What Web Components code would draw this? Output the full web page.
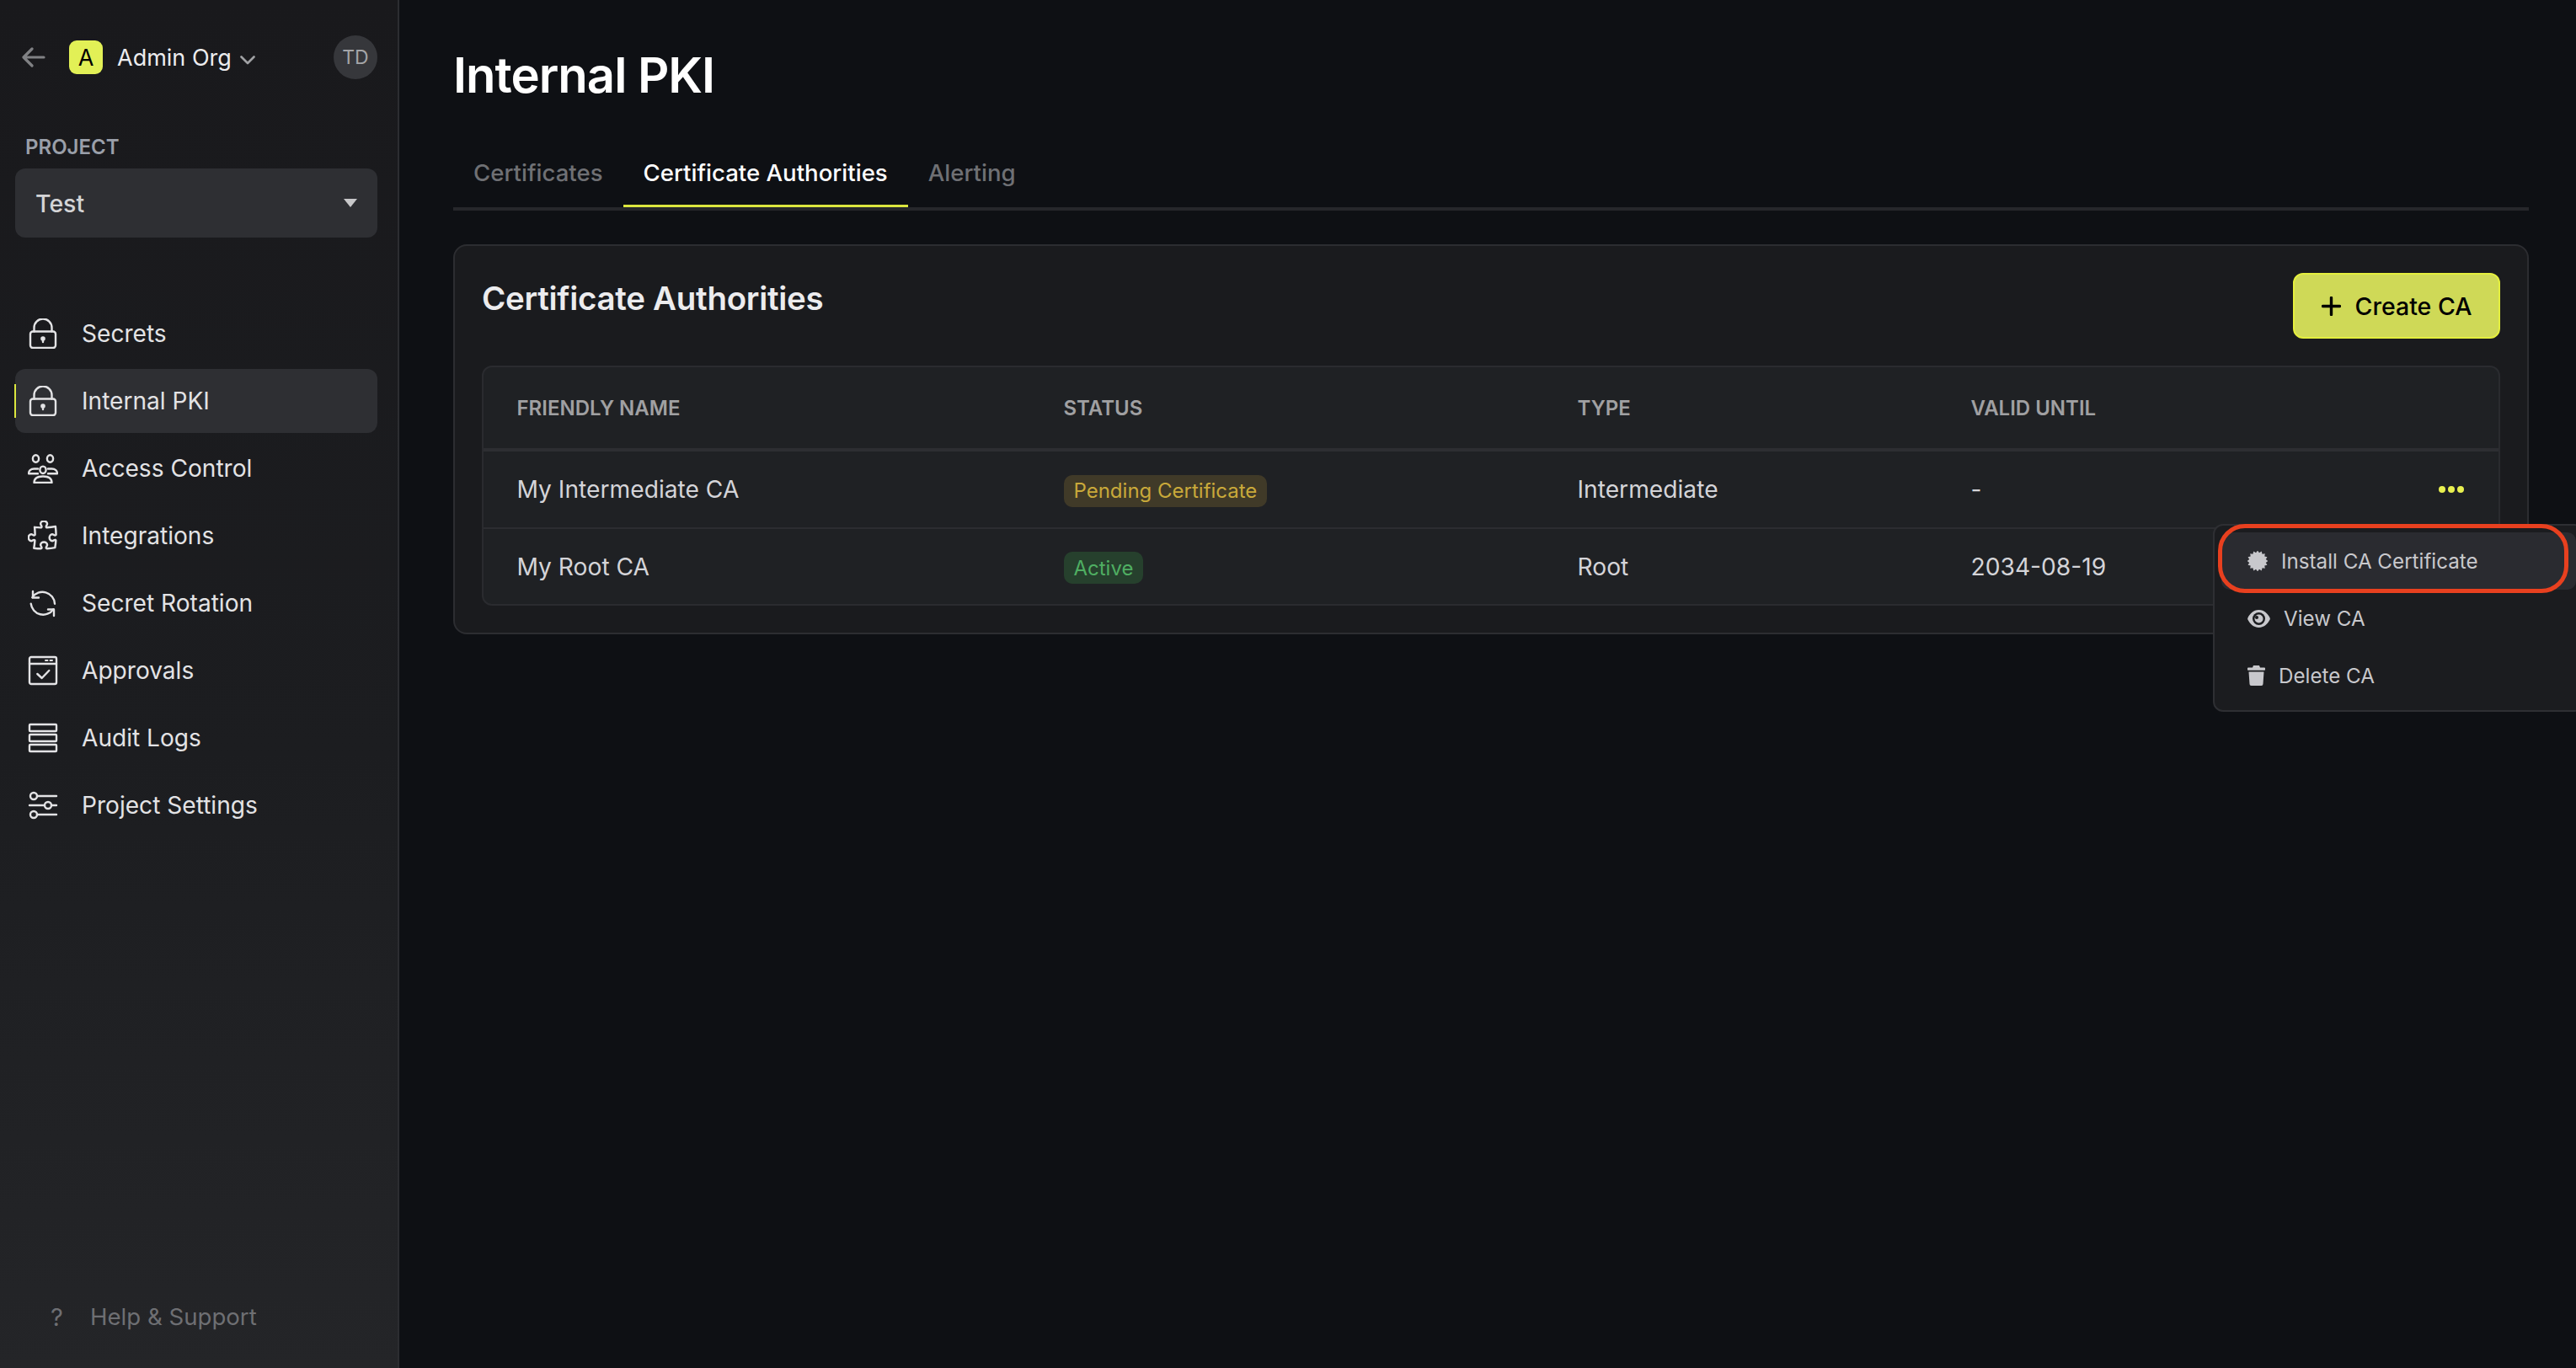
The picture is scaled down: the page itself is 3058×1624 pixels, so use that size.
<!DOCTYPE html>
<html lang="en">
<head>
<meta charset="utf-8">
<title>Internal PKI</title>
<style>
  html, body { margin: 0; background: #0e1014; }
  body { font-family: Inter, "Liberation Sans", sans-serif; color: #e3e3e5; }
</style>
</head>
<body>
<app-shell>
  <side-bar slot="side">
    <org-header></org-header>
    <project-select label="PROJECT" value="Test"></project-select>
    <nav-item icon="lock" label="Secrets"></nav-item>
    <nav-item icon="lock" label="Internal PKI" active></nav-item>
    <nav-item icon="people" label="Access Control"></nav-item>
    <nav-item icon="puzzle" label="Integrations"></nav-item>
    <nav-item icon="rotate" label="Secret Rotation"></nav-item>
    <nav-item icon="approve" label="Approvals"></nav-item>
    <nav-item icon="logs" label="Audit Logs"></nav-item>
    <nav-item icon="sliders" label="Project Settings"></nav-item>
    <help-link slot="foot"></help-link>
  </side-bar>

  <page-title>Internal PKI</page-title>
  <tab-bar>
    <tab-item>Certificates</tab-item>
    <tab-item active>Certificate Authorities</tab-item>
    <tab-item>Alerting</tab-item>
  </tab-bar>

  <ca-card heading="Certificate Authorities">
    <create-button slot="action">Create CA</create-button>
    <ca-table>
      <ca-row head>
        <ca-cell>FRIENDLY NAME</ca-cell>
        <ca-cell>STATUS</ca-cell>
        <ca-cell>TYPE</ca-cell>
        <ca-cell>VALID UNTIL</ca-cell>
        <ca-cell></ca-cell>
      </ca-row>
      <ca-row>
        <ca-cell>My Intermediate CA</ca-cell>
        <ca-cell><status-badge tone="pending">Pending Certificate</status-badge></ca-cell>
        <ca-cell>Intermediate</ca-cell>
        <ca-cell>-</ca-cell>
        <ca-cell><dots-button></dots-button></ca-cell>
      </ca-row>
      <ca-row last>
        <ca-cell>My Root CA</ca-cell>
        <ca-cell><status-badge tone="active">Active</status-badge></ca-cell>
        <ca-cell>Root</ca-cell>
        <ca-cell>2034-08-19</ca-cell>
        <ca-cell></ca-cell>
      </ca-row>
    </ca-table>
  </ca-card>

  <action-menu slot="overlay">
    <menu-item icon="badge" hover>Install CA Certificate</menu-item>
    <menu-item icon="eye">View CA</menu-item>
    <menu-item icon="trash">Delete CA</menu-item>
  </action-menu>
</app-shell>

<script>
// nav icons are drawn on a 36x36 box
const NAV_ICONS = {
  lock: `<rect x="3" y="15.5" width="30" height="19.5" rx="3"/>
    <path d="M7.500 15.500V11a10.500 10.500 0 0 1 21 0v4.500"/>
    <circle cx="18" cy="24" r="1.6" fill="currentColor"/><path d="M18 24v4"/>`,
  people: `<ellipse cx="9.5" cy="6.500" rx="3.600" ry="4.200"/><ellipse cx="26.5" cy="6.500" rx="3.600" ry="4.200"/>
    <ellipse cx="18" cy="19.800" rx="3.600" ry="4.200"/>
    <path d="M12 18.500H7.500C3.500 18.500 1 21 1 24.300h11M24 18.500h4.500c4 0 6.500 2.500 6.500 5.800H24"/>
    <path d="M7.500 35c0-5 4-7.500 10.500-7.500S28.500 30 28.500 35z"/>`,
  puzzle: `<path transform="translate(-3.200 -3.400) scale(1.750)" stroke-width="1.400" d="M14.25 6.087c0-.355.186-.676.401-.959.221-.29.349-.634.349-1.003 0-1.036-1.007-1.875-2.25-1.875s-2.25.84-2.25 1.875c0 .369.128.713.349 1.003.215.283.401.604.401.959a.64.64 0 01-.657.643 48.39 48.39 0 01-4.163-.3c.186 1.613.293 3.25.315 4.907a.656.656 0 01-.658.663c-.355 0-.676-.186-.959-.401a1.647 1.647 0 00-1.003-.349c-1.036 0-1.875 1.007-1.875 2.25s.84 2.25 1.875 2.25c.369 0 .713-.128 1.003-.349.283-.215.604-.401.959-.401.31 0 .555.26.532.57a48.039 48.039 0 01-.642 5.056c1.518.19 3.058.309 4.616.354a.64.64 0 00.657-.643c0-.355-.186-.676-.401-.959a1.647 1.647 0 01-.349-1.003c0-1.035 1.008-1.875 2.25-1.875 1.243 0 2.25.84 2.25 1.875 0 .369-.128.713-.349 1.003-.215.283-.4.604-.4.959 0 .333.277.599.61.58a48.1 48.1 0 005.427-.63 48.05 48.05 0 00.582-4.717.532.532 0 00-.533-.57c-.355 0-.676.186-.959.401-.29.221-.634.349-1.003.349-1.035 0-1.875-1.007-1.875-2.25s.84-2.25 1.875-2.25c.37 0 .713.128 1.003.349.283.215.604.401.96.401a.656.656 0 00.658-.663 48.422 48.422 0 00-.37-5.36c-1.886.342-3.81.574-5.766.689a.578.578 0 01-.61-.58z"/>`,
  rotate: `<path d="M5.300 11.300A14.600 14.600 0 0 1 32 18.700M3.700 18.700A14.600 14.600 0 0 0 30.300 25.300"/>
    <path d="M6 4v7.500h7M31 33v-7.500h-7"/>`,
  approve: `<rect x="2" y="2" width="32" height="32" rx="2"/><path d="M2 10h32"/>
    <path d="M21 6h2.500M26.500 6H29" stroke-width="2"/><path d="M11.300 22l5.400 5 8.600-9"/>`,
  logs: `<rect x="2" y="2" width="32" height="8" rx="1"/><rect x="2" y="14" width="32" height="8" rx="1"/><rect x="2" y="26" width="32" height="8" rx="1"/>`,
  sliders: `<circle cx="7" cy="7" r="4"/><path d="M11 7h23"/><circle cx="24" cy="18" r="4"/><path d="M2 18h18M28 18h6"/>
    <circle cx="7" cy="29" r="4"/><path d="M11 29h23"/>`
};

// certificate seal: a circle with a shallow saw edge
function sealPoints(teeth, outer, inner) {
  const pts = [];
  for (let i = 0; i < teeth * 2; i++) {
    const r = i % 2 ? inner : outer;
    const a = Math.PI * i / teeth;
    pts.push((12 + r * Math.cos(a)).toFixed(2) + ',' + (12 + r * Math.sin(a)).toFixed(2));
  }
  return pts.join(' ');
}

const MENU_ICONS = {
  badge: `<svg width="24" height="24" viewBox="0 0 24 24"><polygon fill="currentColor" points="${sealPoints(16, 12.4, 10)}"/></svg>`,
  eye: `<svg width="27" height="23" viewBox="0 0 27 23"><path fill="currentColor" d="M13.500 1C7 1 2.600 6 .5 10.200a2.800 2.800 0 0 0 0 2.600C2.600 17 7 22 13.500 22s10.900-5 13-9.200a2.800 2.800 0 0 0 0-2.600C24.400 6 20 1 13.500 1z"/>
    <circle cx="13.500" cy="11.500" r="7.500" fill="#1b1c1f"/><circle cx="13.500" cy="11.500" r="5" fill="currentColor"/><circle cx="11" cy="10" r="2" fill="#1b1c1f"/></svg>`,
  trash: `<svg width="21" height="24" viewBox="0 0 21 24"><path fill="currentColor" d="M7 0h7l1 2.500h5a1 1 0 0 1 1 1V5a.8.800 0 0 1-.8.800H.8A.8.800 0 0 1 0 5V3.500a1 1 0 0 1 1-1h5zM1.500 7.500h18l-1 14.500a2 2 0 0 1-2 2H4.500a2 2 0 0 1-2-2z"/></svg>`
};

class AppShell extends HTMLElement {
  constructor() {
    super();
    this.attachShadow({ mode: 'open' }).innerHTML = `
      <style>
        :host { display: block; width: 3058px; height: 1624px; overflow: hidden; position: relative; }
        .frame { display: flex; height: 100%; }
        .main { flex: 1; min-width: 0; padding: 0 56px 0 64px; display: flex; flex-direction: column; }
      </style>
      <div class="frame">
        <slot name="side"></slot>
        <div class="main"><slot></slot></div>
      </div>
      <slot name="overlay"></slot>`;
  }
}

class SideBar extends HTMLElement {
  constructor() {
    super();
    this.attachShadow({ mode: 'open' }).innerHTML = `
      <style>
        :host {
          display: flex; flex-direction: column; box-sizing: border-box; width: 474px; height: 100%;
          background: linear-gradient(180deg, #19191c, #1c1d20 55%, #242528);
          border-right: 2px solid #2c2d31;
        }
        .nav { display: flex; flex-direction: column; gap: 4px; padding: 76px 24px 0 18px; }
        .foot { margin-top: auto; }
      </style>
      <slot name="head"></slot>
      <div class="nav"><slot></slot></div>
      <div class="foot"><slot name="foot"></slot></div>`;
  }
  connectedCallback() {
    // org header and project picker sit above the nav list
    this.querySelector('org-header').slot = 'head';
    this.querySelector('project-select').slot = 'head';
  }
}

class OrgHeader extends HTMLElement {
  constructor() {
    super();
    this.attachShadow({ mode: 'open' }).innerHTML = `
      <style>
        :host { display: flex; align-items: center; height: 52px; padding: 42px 24px 0 26px; }
        .back { width: 28px; height: 24px; color: #808184; }
        .logo {
          width: 40px; height: 40px; margin-left: 28px; border-radius: 9px; background: #e2f056;
          color: #000; font-size: 27px; display: flex; align-items: center; justify-content: center;
        }
        .name { margin-left: 17px; font-size: 27px; color: #ececee; }
        .chev { width: 18px; height: 11px; margin: 6px 0 0 10px; color: #a0a1a4; }
        .user {
          width: 52px; height: 52px; margin-left: auto; border-radius: 50%; background: #36373b;
          color: #a4a5a8; font-size: 23px; display: flex; align-items: center; justify-content: center;
        }
      </style>
      <svg class="back" viewBox="0 0 28 24" fill="none" stroke="currentColor" stroke-width="3.200" stroke-linecap="round" stroke-linejoin="round">
        <path d="M26 12H3M12 2L2 12l10 10"/>
      </svg>
      <div class="logo">A</div>
      <div class="name">Admin Org</div>
      <svg class="chev" viewBox="0 0 18 11" fill="none" stroke="currentColor" stroke-width="2.600" stroke-linecap="round" stroke-linejoin="round">
        <path d="M1.500 1.500L9 9l7.500-7.500"/>
      </svg>
      <div class="user">TD</div>`;
  }
}

class ProjectSelect extends HTMLElement {
  constructor() {
    super();
    this.attachShadow({ mode: 'open' });
  }
  connectedCallback() {
    this.shadowRoot.innerHTML = `
      <style>
        :host { display: block; padding: 67px 24px 0 18px; }
        .label { font-size: 24px; font-weight: 600; line-height: 28px; color: #9a9fa9; padding-left: 12px; margin-bottom: 11px; }
        .box {
          height: 82px; border-radius: 12px; background: #2e2f33; display: flex; align-items: center;
          justify-content: space-between; padding: 0 24px 0 24px; font-size: 28.500px; font-weight: 500; color: #d4d4d6;
        }
        .caret { width: 0; height: 0; border: 8px solid transparent; border-top: 10px solid #c8c8ca; border-bottom: 0; }
      </style>
      <div class="label">${this.getAttribute('label')}</div>
      <div class="box"><span>${this.getAttribute('value')}</span><span class="caret"></span></div>`;
  }
}

class NavItem extends HTMLElement {
  constructor() {
    super();
    this.attachShadow({ mode: 'open' });
  }
  connectedCallback() {
    this.shadowRoot.innerHTML = `
      <style>
        :host { display: flex; align-items: center; gap: 28px; position: relative; height: 76px; padding-left: 15px; border-radius: 12px; font-size: 28.100px; color: #e3e3e5; }
        :host([active]) { background: #2e2f33; }
        :host([active])::before { content: ""; position: absolute; left: -1px; top: 18px; width: 2px; height: 40px; background: #dbe63e; }
        svg { width: 36px; height: 36px; flex: none; }
      </style>
      <svg viewBox="0 0 36 36" fill="none" stroke="currentColor" stroke-width="2.400" stroke-linecap="round" stroke-linejoin="round">${NAV_ICONS[this.getAttribute('icon')]}</svg>
      <span>${this.getAttribute('label')}</span>`;
  }
}

class HelpLink extends HTMLElement {
  constructor() {
    super();
    this.attachShadow({ mode: 'open' }).innerHTML = `
      <style>
        :host { display: flex; align-items: center; height: 40px; padding: 0 0 41px 60px; font-size: 27.600px; color: #6e6f73; }
        .mark { width: 47px; font-size: 29px; }
      </style>
      <span class="mark">?</span><span>Help &amp; Support</span>`;
  }
}

class PageTitle extends HTMLElement {
  constructor() {
    super();
    this.attachShadow({ mode: 'open' }).innerHTML = `
      <style>
        :host { display: block; margin-top: 47px; font-size: 58px; line-height: 84px; font-weight: 600; color: #fff; letter-spacing: -1px; }
      </style>
      <slot></slot>`;
  }
}

class TabBar extends HTMLElement {
  constructor() {
    super();
    this.attachShadow({ mode: 'open' }).innerHTML = `
      <style>
        :host { display: flex; margin-top: 39px; border-bottom: 4px solid #26272b; }
      </style>
      <slot></slot>`;
  }
}

class TabItem extends HTMLElement {
  constructor() {
    super();
    this.attachShadow({ mode: 'open' }).innerHTML = `
      <style>
        :host { display: block; height: 76px; line-height: 70px; padding: 0 24px; font-size: 27.600px; font-weight: 500; color: #6f7074; }
        :host([active]) { color: #fff; border-bottom: 3px solid #dbe63e; height: 73px; }
      </style>
      <slot></slot>`;
  }
}

class CaCard extends HTMLElement {
  constructor() {
    super();
    this.attachShadow({ mode: 'open' });
  }
  connectedCallback() {
    this.shadowRoot.innerHTML = `
      <style>
        :host { display: block; margin-top: 40px; padding: 32px 32px 32px; border: 2px solid #2c2d31; border-radius: 16px; background: #1a1b1e; }
        .top { display: flex; justify-content: space-between; align-items: flex-start; margin-bottom: 32px; }
        h2 { margin: 0; font-size: 38.500px; line-height: 60px; font-weight: 600; color: #ececee; letter-spacing: -0.300px; }
      </style>
      <div class="top"><h2>${this.getAttribute('heading')}</h2><slot name="action"></slot></div>
      <slot></slot>`;
  }
}

class CreateButton extends HTMLElement {
  constructor() {
    super();
    this.attachShadow({ mode: 'open' }).innerHTML = `
      <style>
        :host {
          display: flex; align-items: center; justify-content: center; gap: 17px; box-sizing: border-box;
          width: 246px; height: 78px; border-radius: 12px; background: #cfd957; border: 2px solid #e4ef3e;
          color: #000; font-size: 28.500px; font-weight: 500;
        }
        svg { width: 23px; height: 23px; }
      </style>
      <svg viewBox="0 0 23 23" fill="none" stroke="#000" stroke-width="3.400" stroke-linecap="round"><path d="M11.500 1.500v20M1.500 11.500h20"/></svg>
      <slot></slot>`;
  }
}

class CaTable extends HTMLElement {
  constructor() {
    super();
    this.attachShadow({ mode: 'open' }).innerHTML = `
      <style>
        :host {
          display: block; border: 2px solid #2a2b2f; border-radius: 12px; background: #1f2124;
          --cols: 649px 610px 467px 1fr 140px;
        }
      </style>
      <slot></slot>`;
  }
}

class CaRow extends HTMLElement {
  constructor() {
    super();
    this.attachShadow({ mode: 'open' }).innerHTML = `
      <style>
        :host { display: grid; grid-template-columns: var(--cols); align-items: center; height: 90px; border-bottom: 2px solid #2c2d31; font-size: 28.200px; color: #d4d4d8; }
        :host([head]) { height: 96px; border-bottom: 4px solid #2d2e32; font-size: 24px; font-weight: 600; color: #a0a0a2; }
        :host([last]) { height: 89px; border-bottom: 0; }
      </style>
      <slot></slot>`;
  }
}

class CaCell extends HTMLElement {
  constructor() {
    super();
    this.attachShadow({ mode: 'open' }).innerHTML = `
      <style>:host { display: block; padding-left: 39.500px; }</style>
      <slot></slot>`;
  }
}

class StatusBadge extends HTMLElement {
  constructor() {
    super();
    this.attachShadow({ mode: 'open' }).innerHTML = `
      <style>
        :host { display: inline-flex; align-items: center; height: 38px; margin-top: 3px; padding: 0 12px; border-radius: 10px; font-size: 24px; vertical-align: middle; }
        :host([tone="pending"]) { background: #403a28; color: #c9a93a; }
        :host([tone="active"]) { background: #26402d; color: #4fae62; }
      </style>
      <slot></slot>`;
  }
}

class DotsButton extends HTMLElement {
  constructor() {
    super();
    this.attachShadow({ mode: 'open' }).innerHTML = `
      <style>
        :host { display: flex; gap: 3px; justify-content: flex-end; padding-right: 41px; }
        i { flex: none; width: 8px; height: 8px; border-radius: 50%; background: #e8f050; }
      </style>
      <i></i><i></i><i></i>`;
  }
}

class ActionMenu extends HTMLElement {
  constructor() {
    super();
    this.attachShadow({ mode: 'open' }).innerHTML = `
      <style>
        :host {
          position: absolute; left: 2627px; top: 622px; box-sizing: border-box; width: 441px; height: 223px;
          padding: 8px; border: 2px solid #2e2f33; border-radius: 12px; background: #1b1c1f;
        }
        .ring { position: absolute; left: 4px; top: -2px; width: 416px; height: 82px; box-sizing: border-box; border: 5px solid #e8401f; border-radius: 32px; }
      </style>
      <slot></slot>
      <div class="ring"></div>`;
  }
}

class MenuItem extends HTMLElement {
  constructor() {
    super();
    this.attachShadow({ mode: 'open' });
  }
  connectedCallback() {
    this.shadowRoot.innerHTML = `
      <style>
        :host { display: flex; align-items: center; gap: 16px; height: 68px; padding-left: 31px; border-radius: 10px; font-size: 24.200px; color: #c8c8cc; }
        :host([hover]) { background: #2a2b30; }
        svg { flex: none; display: block; }
      </style>
      ${MENU_ICONS[this.getAttribute('icon')]}
      <slot></slot>`;
  }
}

customElements.define('app-shell', AppShell);
customElements.define('side-bar', SideBar);
customElements.define('org-header', OrgHeader);
customElements.define('project-select', ProjectSelect);
customElements.define('nav-item', NavItem);
customElements.define('help-link', HelpLink);
customElements.define('page-title', PageTitle);
customElements.define('tab-bar', TabBar);
customElements.define('tab-item', TabItem);
customElements.define('ca-card', CaCard);
customElements.define('create-button', CreateButton);
customElements.define('ca-table', CaTable);
customElements.define('ca-row', CaRow);
customElements.define('ca-cell', CaCell);
customElements.define('status-badge', StatusBadge);
customElements.define('dots-button', DotsButton);
customElements.define('action-menu', ActionMenu);
customElements.define('menu-item', MenuItem);
</script>
</body>
</html>
